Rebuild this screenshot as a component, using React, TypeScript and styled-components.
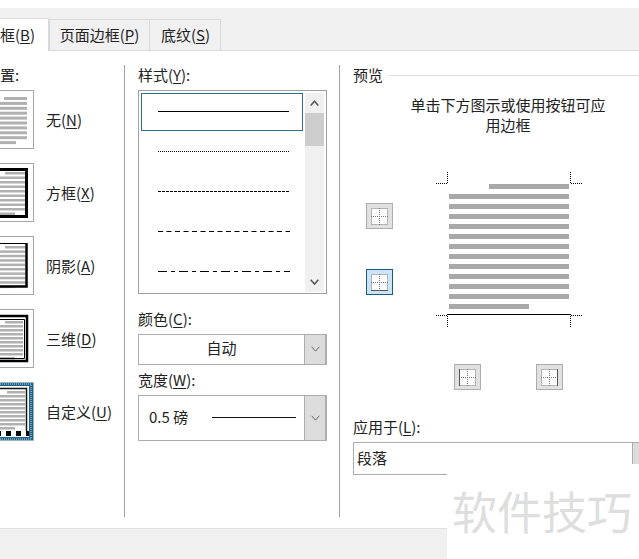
import React from "react";
import styled, { createGlobalStyle } from "styled-components";

const Global = createGlobalStyle`
  html, body { margin: 0; padding: 0; background: #fff; overflow: hidden; }
`;
const Page = styled.div`
  position: relative; width: 639px; height: 559px; overflow: hidden; display: flex; flex-direction: column; background: #fff;
  font-family: "Noto Sans CJK SC", "Liberation Sans", sans-serif; font-size: 15px; color: #222;
`;
const TopGap = styled.div`height: 8px; flex-shrink: 0;`;
const TabBar = styled.div`
  height: 42px; flex-shrink: 0; background: #f0f0f0; border-bottom: 1px solid #d9d9d9; display: flex; align-items: flex-end;
`;
const Tab = styled.div<{ $w: number; $pad: number }>`
  width: ${p => p.$w}px; box-sizing: border-box; height: 31px; background: #f0f0f0;
  border: 1px solid #d9d9d9; border-bottom: 0; border-right: 0;
  display: flex; align-items: center; justify-content: center;
  white-space: nowrap; line-height: 20px; padding-left: ${p => p.$pad}px;
  &:last-child { border-right: 1px solid #d9d9d9; }
`;
const ActiveTab = styled.div`
  width: 49px; box-sizing: border-box; height: 33px; margin-bottom: -1px; background: #fff;
  border-top: 1px solid #d9d9d9; border-right: 1px solid #d9d9d9;
  display: flex; align-items: center; justify-content: flex-end; padding-right: 13px;
  white-space: nowrap; line-height: 20px;
`;
const Body = styled.div`flex: 1; display: flex; padding-top: 14px; min-height: 0;`;
const Footer = styled.div`height: 30px; flex-shrink: 0; background: #f0f0f0; border-top: 1px solid #dfdfdf;`;
const Col1 = styled.div`width: 125px; height: 452px; box-sizing: border-box; border-right: 1px solid #a0a0a0; flex-shrink: 0; display: flex; flex-direction: column; padding-top: 1px;`;
const Col2 = styled.div`width: 215px; height: 452px; box-sizing: border-box; padding-top: 1px; border-right: 1px solid #a0a0a0; flex-shrink: 0; padding-left: 13px; display: flex; flex-direction: column;`;
const Col3 = styled.div`flex: 1; min-width: 0; padding-left: 13px; display: flex; flex-direction: column;`;
const SetLabel = styled.div`height: 20px; line-height: 18px; margin-left: -15px; white-space: nowrap; margin-bottom: 4px;`;
const ThumbRow = styled.div`display: flex; align-items: center; height: 59px; margin-bottom: 14px; gap: 12px;`;
const Thumb = styled.div<{ $sel?: boolean }>`
  width: 34px; height: 59px; box-sizing: border-box; flex-shrink: 0; overflow: hidden; background: #fff;
  border: ${p => (p.$sel ? "0" : "1px solid #a6a6a6")}; border-left: 0;
`;
const ThumbSvg = styled.svg`display: block;`;
const ThumbLabel = styled.span`line-height: 18px; white-space: nowrap;`;
const U = styled.span`text-decoration: underline; text-underline-offset: 2px; text-decoration-thickness: 1px;`;
const FieldLabel = styled.div`height: 20px; line-height: 18px; white-space: nowrap;`;
const ListBox = styled.div`
  width: 189px; height: 204px; margin-top: 4px; flex-shrink: 0; box-sizing: border-box; border: 1px solid #a0a0a0; padding: 2px 2px 1px 2px; display: flex; gap: 2px;
`;
const Rows = styled.div`width: 162px; display: flex; flex-direction: column;`;
const StyleRow = styled.div<{ $sel?: boolean }>`
  height: 40px; flex-shrink: 0; box-sizing: border-box; display: flex; align-items: center; padding: 0 13px 0 17px;
  ${p => (p.$sel ? "height: 38px; border: 1px solid #2f7186; padding-left: 16px; padding-bottom: 1px;" : "")}
`;
const LineSvg = styled.svg`display: block;`;
const Scroll = styled.div`width: 19px; background: #f0f0f0; display: flex; flex-direction: column;`;
const ScrollBtn = styled.div`height: 20px; display: flex; align-items: center; justify-content: center; flex-shrink: 0;`;
const ScrollThumb = styled.div`height: 33px; background: #cdcdcd; flex-shrink: 0;`;
const ScrollTrack = styled.div`flex: 1;`;
const ComboLabel = styled(FieldLabel)`margin-top: 16px;`;
const ComboLabel2 = styled(FieldLabel)`margin-top: 6px;`;
const Combo = styled.div<{ $h: number }>`
  width: 189px; height: ${p => p.$h}px; margin-top: 4px; flex-shrink: 0; box-sizing: border-box; border: 1px solid #acacac; display: flex;
`;
const ComboValue = styled.div`flex: 1; display: flex; align-items: center; justify-content: center; padding: 0 0 3px 0; line-height: 18px;`;
const ComboWidthValue = styled.div`flex: 1; display: flex; align-items: center; padding: 0 0 2px 10px; line-height: 18px;`;
const WidthText = styled.span`width: 63px; flex-shrink: 0;`;
const WidthLine = styled.div`width: 84px; height: 1px; background: #111;`;
const ComboArrow = styled.div`width: 22px; background: #dcdcdc; border-left: 1px solid #acacac; border-right: 1px solid #acacac; display: flex; align-items: center; justify-content: center; box-sizing: border-box;`;
const PreviewHead = styled.div`display: flex; align-items: center; gap: 5px; height: 20px; line-height: 18px; flex-shrink: 0;`;
const Rule = styled.div`flex: 1; height: 1px; background: #e0e0e0;`;
const Hint = styled.div`width: 200px; margin: 10px 0 0 55px; text-align: center; line-height: 20px; flex-shrink: 0;`;
const Stage = styled.div`display: flex; margin-top: 37px; height: 155px; flex-shrink: 0;`;
const SideBtns = styled.div`display: flex; flex-direction: column; gap: 40px; padding: 31px 0 0 13px; width: 27px; flex-shrink: 0;`;
const Btn = styled.div<{ $on?: boolean }>`
  width: 27px; height: 26px; box-sizing: border-box; background: ${p => (p.$on ? "#cce4f7" : "#e1e1e1")};
  border: 1px solid ${p => (p.$on ? "#1d5a80" : "#adadad")}; display: flex; align-items: center; justify-content: center;
`;
const Diagram = styled.svg`display: block; margin-left: 43px; flex-shrink: 0;`;
const BottomBtns = styled.div`display: flex; gap: 55px; margin: 37px 0 0 101px; flex-shrink: 0;`;
const ApplyLabel = styled(FieldLabel)`margin-top: 28px;`;
const ApplyCombo = styled.div`width: 300px; height: 33px; margin-top: 4px; flex-shrink: 0; box-sizing: border-box; border: 1px solid #acacac; border-right: 0; display: flex; align-items: center; padding: 0 0 2px 3px; position: relative; line-height: 18px;`;
const ApplyArrow = styled.div`position: absolute; left: 278px; top: 0; bottom: 0; width: 22px; background: #dcdcdc; border-left: 1px solid #acacac; display: flex; align-items: center; justify-content: center;`;
const Watermark = styled.div`
  position: absolute; left: 447px; top: 464px; width: 192px; height: 95px; background: #fff; color: #dedede; font-size: 45px; line-height: 45px;
  padding: 24px 0 0 5px; box-sizing: border-box; white-space: nowrap;
`;

function ThumbArt({ kind }: { kind: string }) {
  const sel = kind === "custom";
  const oy = sel ? 0 : 1; // svg sits inside the 1px top border except when selected
  const conf: Record<string, { y0: number; step: number; right: number; start: number; lastEnd: number }> = {
    none: { y0: 7, step: 4.9, right: 27, start: 4, lastEnd: 16 },
    box: { y0: 9, step: 4.5, right: 25, start: 5, lastEnd: 15 },
    shadow: { y0: 10, step: 4.4, right: 25, start: 5, lastEnd: 15 },
    "3d": { y0: 12, step: 4, right: 23, start: 5, lastEnd: 15 },
    custom: { y0: 9, step: 4, right: 25, start: 7, lastEnd: 15 },
  };
  const c = conf[kind];
  return (
    <ThumbSvg width="34" height="59" viewBox={`0 ${oy} 34 59`}>
      {Array.from({ length: 10 }, (_, i) => i).map(i => (
        <rect
          key={i}
          x={i === 0 ? c.start : 0}
          y={c.y0 + i * c.step}
          width={i === 0 ? c.right - c.start : i === 9 ? c.lastEnd : c.right}
          height={kind === "none" ? 3 : 2.5}
          fill="#b0b0b0"
        />
      ))}
      {kind === "box" && <path d="M-2 6.5 H26.5 V53.5 H-2" fill="none" stroke="#000" strokeWidth="3" />}
      {kind === "shadow" && (
        <>
          <path d="M-2 7.5 H26.5" fill="none" stroke="#000" strokeWidth="1" />
          <path d="M-2 50.5 H26.5 V7" fill="none" stroke="#000" strokeWidth="2.5" />
        </>
      )}
      {kind === "3d" && (
        <>
          <path d="M-2 7 H27 V52 H-2" fill="none" stroke="#000" strokeWidth="2.5" />
          <path d="M-2 10.5 H24.5 V49.5 H-2" fill="none" stroke="#000" strokeWidth="1" />
        </>
      )}
      {sel && (
        <>
          <path d="M-2 6.5 H26.5 V49" fill="none" stroke="#111" strokeWidth="1.5" />
          <path d="M-4 51.5 H30" fill="none" stroke="#000" strokeWidth="5" strokeDasharray="5 5" />
          <path d="M-2 2 H31 V57 H-2" fill="none" stroke="#1f6086" strokeWidth="4" />
          <path d="M-2 2 H31 V57 H-2" fill="none" stroke="#cfe3ee" strokeWidth="1" strokeDasharray="1 1" />
          <path d="M-2 .5 H33.5 V58.5 H-2" fill="none" stroke="#9db4c0" strokeWidth="1" />
        </>
      )}
    </ThumbSvg>
  );
}

const GridIcon = ({ edge }: { edge: "none" | "bottom" | "left" | "right" }) => (
  <svg width="17" height="17" viewBox="0 0 17 17">
    <rect x="0.5" y="0.5" width="16" height="16" fill="#fff" />
    <path d="M0.5 .5H16.5V16.5H.5Z M8.5 0V17 M0 8.5H17" fill="none" stroke="#777" strokeWidth="1" strokeDasharray="1 1" />
    {edge === "bottom" && <path d="M0 16.5H17" stroke="#555" />}
    {edge === "left" && <path d="M.5 0V17" stroke="#555" />}
    {edge === "right" && <path d="M16.5 0V17" stroke="#555" />}
  </svg>
);

const Chevron = ({ up, c = "#555", w = 1.5, s = 9 }: { up?: boolean; c?: string; w?: number; s?: number }) => (
  <svg width={s} height={s * 0.7} viewBox="0 0 9 6.3">
    <path d={up ? "M0.7 5.5 L4.5 1.2 L8.3 5.5" : "M0.7 0.8 L4.5 5.1 L8.3 0.8"} fill="none" stroke={c} strokeWidth={w} />
  </svg>
);

const dashes = [undefined, "1 1", "3 1", "5 3.5", "9 4 4 4"];

export default function App() {
  const bars = Array.from({ length: 13 }, (_, i) => i);
  return (
    <Page>
      <Global />
      <TopGap />
      <TabBar>
        <ActiveTab><span>边框(<U>B</U>)</span></ActiveTab>
        <Tab $w={100} $pad={0}><span>页面边框(<U>P</U>)</span></Tab>
        <Tab $w={72} $pad={1}><span>底纹(<U>S</U>)</span></Tab>
      </TabBar>
      <Body>
        <Col1>
          <SetLabel>设置:</SetLabel>
          <ThumbRow><Thumb><ThumbArt kind="none" /></Thumb><ThumbLabel>无(<U>N</U>)</ThumbLabel></ThumbRow>
          <ThumbRow><Thumb><ThumbArt kind="box" /></Thumb><ThumbLabel>方框(<U>X</U>)</ThumbLabel></ThumbRow>
          <ThumbRow><Thumb><ThumbArt kind="shadow" /></Thumb><ThumbLabel>阴影(<U>A</U>)</ThumbLabel></ThumbRow>
          <ThumbRow><Thumb><ThumbArt kind="3d" /></Thumb><ThumbLabel>三维(<U>D</U>)</ThumbLabel></ThumbRow>
          <ThumbRow><Thumb $sel><ThumbArt kind="custom" /></Thumb><ThumbLabel>自定义(<U>U</U>)</ThumbLabel></ThumbRow>
        </Col1>
        <Col2>
          <FieldLabel>样式(<U>Y</U>):</FieldLabel>
          <ListBox>
            <Rows>
              {dashes.map((d, i) => (
                <StyleRow key={i} $sel={i === 0}>
                  <LineSvg width="132" height="1"><path d="M0 .5H132" stroke="#000" strokeDasharray={d} /></LineSvg>
                </StyleRow>
              ))}
            </Rows>
            <Scroll>
              <ScrollBtn><Chevron up /></ScrollBtn>
              <ScrollThumb />
              <ScrollTrack />
              <ScrollBtn><Chevron /></ScrollBtn>
            </Scroll>
          </ListBox>
          <ComboLabel>颜色(<U>C</U>):</ComboLabel>
          <Combo $h={31}>
            <ComboValue>自动</ComboValue>
            <ComboArrow><Chevron c="#666" w={1} /></ComboArrow>
          </Combo>
          <ComboLabel2>宽度(<U>W</U>):</ComboLabel2>
          <Combo $h={46}>
            <ComboWidthValue><WidthText>0.5 磅</WidthText><WidthLine /></ComboWidthValue>
            <ComboArrow><Chevron c="#666" w={1} /></ComboArrow>
          </Combo>
        </Col2>
        <Col3>
          <PreviewHead>预览<Rule /></PreviewHead>
          <Hint>单击下方图示或使用按钮可应用边框</Hint>
          <Stage>
            <SideBtns>
              <Btn><GridIcon edge="none" /></Btn>
              <Btn $on><GridIcon edge="bottom" /></Btn>
            </SideBtns>
            <Diagram width="146" height="155" viewBox="0 0 146 155">
              {bars.map(i => (
                <rect key={i} x={i === 0 ? 53 : 13} y={i * 10 + 12} width={i === 0 || i === 12 ? 80 : 120} height="5" fill="#a9a9a9" />
              ))}
              <path d="M11 142.5H135" stroke="#000" strokeWidth="1.2" />
              <path
                d="M0 11.5H11.5V0 M134.5 0V11.5H146 M0 143.5H11.5V155 M134.5 155V143.5H146"
                fill="none"
                stroke="#000"
                strokeDasharray="1 1"
              />
            </Diagram>
          </Stage>
          <BottomBtns>
            <Btn><GridIcon edge="left" /></Btn>
            <Btn><GridIcon edge="right" /></Btn>
          </BottomBtns>
          <ApplyLabel>应用于(<U>L</U>):</ApplyLabel>
          <ApplyCombo>段落<ApplyArrow><Chevron c="#666" w={1} /></ApplyArrow></ApplyCombo>
        </Col3>
      </Body>
      <Footer />
      <Watermark>软件技巧</Watermark>
    </Page>
  );
}
